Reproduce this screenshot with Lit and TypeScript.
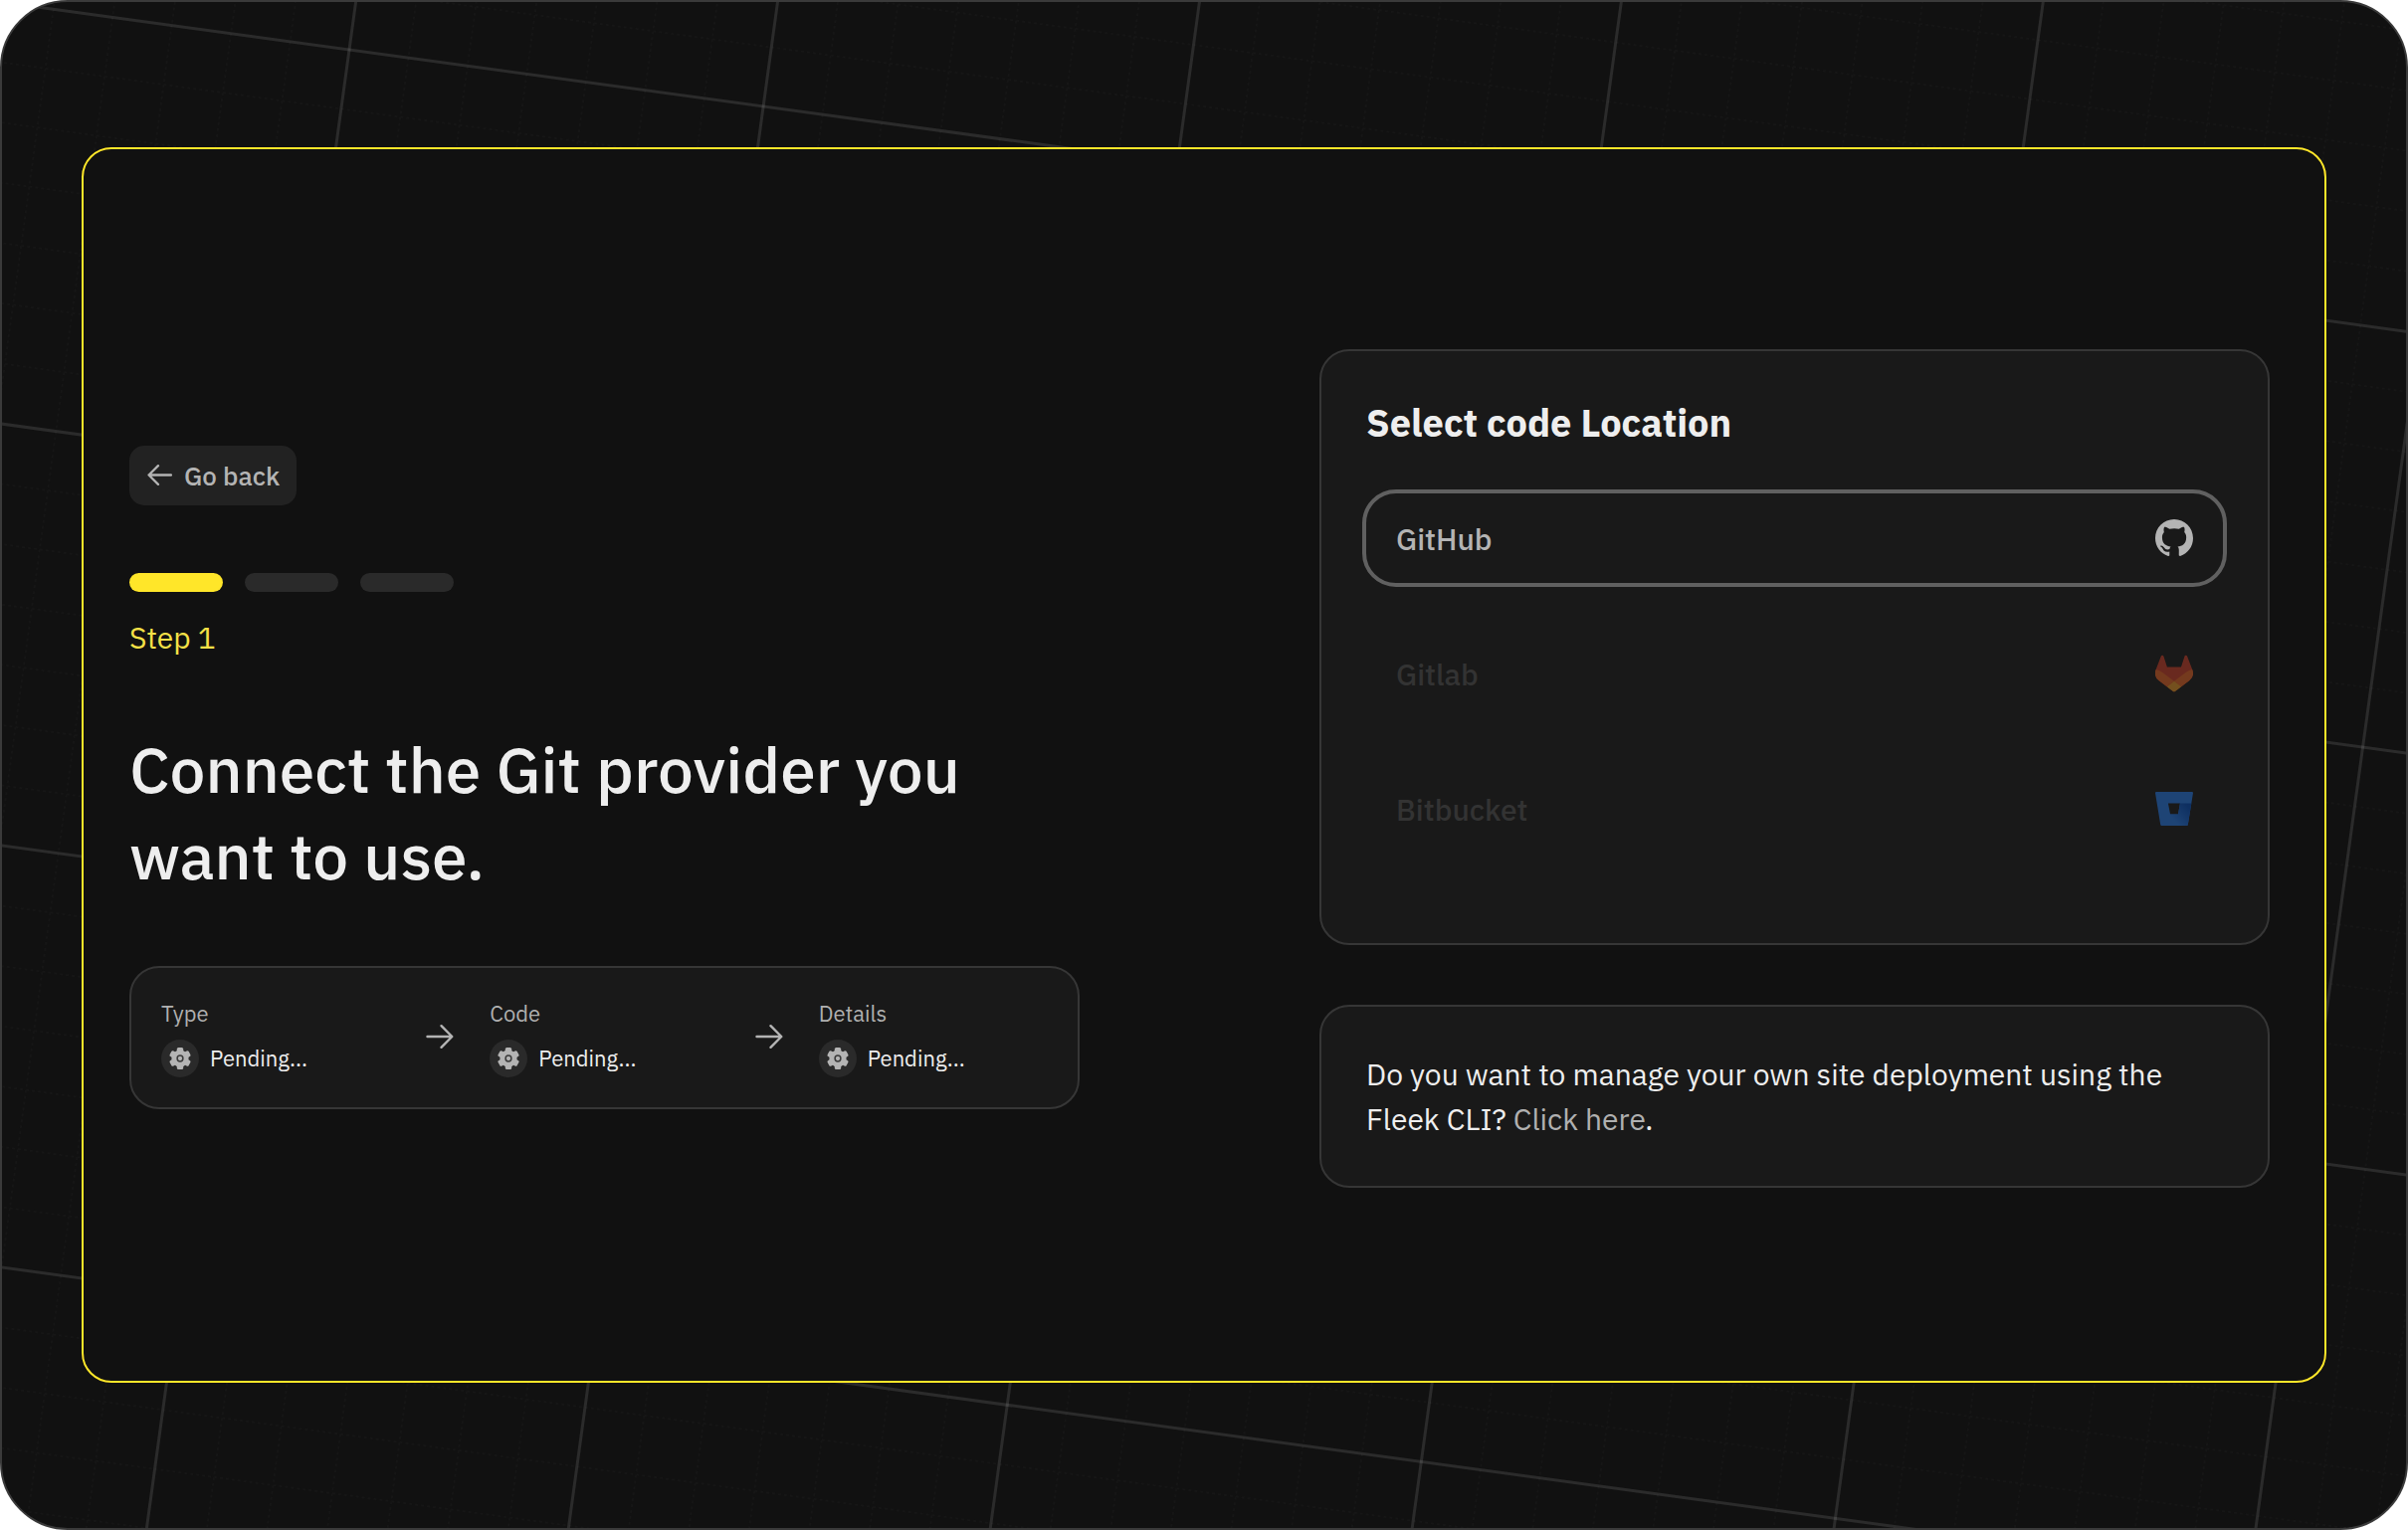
import { LitElement, html, svg, css } from "lit";
import { customElement, property } from "lit/decorators.js";
import { classMap } from "lit/directives/class-map.js";

/** Tilted backdrop: strong lines every seven cells, faint dashed ones between. */
@customElement("grid-backdrop")
class GridBackdrop extends LitElement {
  static styles = css`
    :host {
      display: block;
    }
    .grid {
      display: block;
      width: 100%;
      height: 100%;
    }
    .major {
      stroke: rgba(255, 255, 255, 0.11);
      stroke-width: 3;
    }
    .minor {
      stroke: #161616;
      stroke-width: 2;
      stroke-dasharray: 3 3;
    }
  `;

  render() {
    const cell = 60;
    const reach = 4200;
    const steps = Array.from({ length: 113 }, (_, i) => i - 56);
    const name = (n: number) => (n % 7 === 0 ? "major" : "minor");
    const ordered = [...steps].sort((a, b) => Number(a % 7 === 0) - Number(b % 7 === 0));
    return html`
      <svg class="grid" aria-hidden="true">
        <g transform="translate(349 48) rotate(7.8)">
          ${ordered.map(
            (n) => svg`
              <line class=${name(n)} x1=${n * cell} x2=${n * cell} y1=${-reach} y2=${reach}></line>
              <line class=${name(n)} y1=${n * cell} y2=${n * cell} x1=${-reach} x2=${reach}></line>`
          )}
        </g>
      </svg>
    `;
  }
}

const arrowRight = html`
  <svg class="arrow" viewBox="0 0 28 28" aria-hidden="true">
    <path d="M1.5 14h24.5M15.5 3.2 26.3 14 15.5 24.8" fill="none" stroke="currentColor"
      stroke-width="2.4" stroke-linecap="round" stroke-linejoin="round"></path>
  </svg>
`;

const arrowLeft = html`
  <svg class="back-arrow" viewBox="0 0 24 24" aria-hidden="true">
    <path d="M23 12H1.5M10.5 3 1.5 12l9 9" fill="none" stroke="currentColor"
      stroke-width="2.2" stroke-linecap="round" stroke-linejoin="round"></path>
  </svg>
`;

const gear = html`
  <svg class="gear" viewBox="0 0 24 24" aria-hidden="true">
    <g fill="#b4b4b4">
      <circle cx="12" cy="12" r="8.6"></circle>
      <rect x="8.8" y="1" width="6.4" height="22" rx="1.6"></rect>
      <rect x="8.8" y="1" width="6.4" height="22" rx="1.6" transform="rotate(60 12 12)"></rect>
      <rect x="8.8" y="1" width="6.4" height="22" rx="1.6" transform="rotate(120 12 12)"></rect>
    </g>
    <circle cx="12" cy="12" r="2.9" fill="none" stroke="#3a3a3a" stroke-width="1.5"></circle>
  </svg>
`;

const githubLogo = html`
  <svg class="logo" viewBox="0 0 16 16" aria-hidden="true">
    <path fill="#b4b4b4" d="M8 0C3.58 0 0 3.58 0 8c0 3.54 2.29 6.53 5.47 7.59.4.07.55-.17.55-.38 0-.19-.01-.82-.01-1.49-2.01.37-2.53-.49-2.69-.94-.09-.23-.48-.94-.82-1.13-.28-.15-.68-.52-.01-.53.63-.01 1.08.58 1.23.82.72 1.21 1.87.87 2.33.66.07-.52.28-.87.51-1.07-1.78-.2-3.64-.89-3.64-3.95 0-.87.31-1.59.82-2.15-.08-.2-.36-1.02.08-2.12 0 0 .67-.21 2.2.82.64-.18 1.32-.27 2-.27s1.36.09 2 .27c1.53-1.04 2.2-.82 2.2-.82.44 1.1.16 1.92.08 2.12.51.56.82 1.27.82 2.15 0 3.07-1.87 3.75-3.65 3.95.29.25.54.73.54 1.48 0 1.07-.01 1.93-.01 2.2 0 .21.15.46.55.38A8.01 8.01 0 0 0 16 8c0-4.42-3.58-8-8-8z"></path>
  </svg>
`;

const gitlabLogo = html`
  <svg class="logo" viewBox="0 0 25 24" aria-hidden="true">
    <path fill="#e24329" d="M24.507 9.5l-.034-.09L21.082.562a.896.896 0 00-1.694.091l-2.29 7.01H7.825L5.535.653a.898.898 0 00-1.694-.09L.451 9.411.416 9.5a6.297 6.297 0 002.09 7.278l.012.01.03.022 5.16 3.867 2.56 1.935 1.554 1.176a1.051 1.051 0 001.268 0l1.555-1.176 2.56-1.935 5.197-3.89.014-.01A6.297 6.297 0 0024.507 9.5z"></path>
    <path fill="#fc6d26" d="M24.507 9.5l-.034-.09a11.44 11.44 0 00-4.56 2.051l-7.447 5.632 4.742 3.584 5.197-3.89.014-.01A6.297 6.297 0 0024.507 9.5z"></path>
    <path fill="#fca326" d="M7.707 20.677l2.56 1.935 1.555 1.176a1.051 1.051 0 001.268 0l1.555-1.176 2.56-1.935-4.743-3.584-4.755 3.584z"></path>
    <path fill="#fc6d26" d="M5.01 11.461a11.43 11.43 0 00-4.56-2.05L.416 9.5a6.297 6.297 0 002.09 7.278l.012.01.03.022 5.16 3.867 4.745-3.584-7.444-5.632z"></path>
  </svg>
`;

const bitbucketLogo = html`
  <svg class="logo" viewBox="0 0 24 24" aria-hidden="true">
    <defs>
      <linearGradient id="bucket-shade" x1="23" y1="9" x2="12" y2="19" gradientUnits="userSpaceOnUse">
        <stop offset="0.18" stop-color="#0052cc"></stop>
        <stop offset="1" stop-color="#2684ff"></stop>
      </linearGradient>
    </defs>
    <path fill="#2684ff" d="M.778 1.213a.768.768 0 00-.768.892l3.263 19.81c.084.5.515.868 1.022.873H19.95a.772.772 0 00.77-.646l3.27-20.03a.768.768 0 00-.768-.891zM14.52 15.53H9.522L8.17 8.466h7.561z"></path>
    <path fill="url(#bucket-shade)" d="M22.95 8.466H15.73L14.52 15.53H9.522L3.62 22.54c.2.16.44.248.675.248H19.95a.772.772 0 00.77-.646z"></path>
  </svg>
`;

/** The "Type → Code → Details" summary card. */
@customElement("deploy-summary")
class DeploySummary extends LitElement {
  static styles = css`
    :host {
      display: block;
    }
    .card {
      display: flex;
      align-items: center;
      gap: 36px;
      padding: 29px 30px 30px;
      border: 2px solid #363636;
      border-radius: 30px;
      background: #191919;
    }
    .item {
      flex: 1;
      display: flex;
      flex-direction: column;
      gap: 10px;
      font-size: 22px;
      line-height: 33px;
    }
    .label {
      color: #b0b0b0;
    }
    .status {
      display: flex;
      align-items: center;
      gap: 11px;
      color: #eeeeee;
    }
    .badge {
      display: flex;
      align-items: center;
      justify-content: center;
      width: 38px;
      height: 38px;
      border-radius: 50%;
      background: #2a2a2a;
    }
    .gear {
      width: 24px;
      height: 24px;
    }
    .arrow {
      flex: none;
      width: 28px;
      height: 28px;
      color: #b4b4b4;
    }
  `;

  @property({ attribute: false }) items: string[] = ["Type", "Code", "Details"];

  render() {
    return html`
      <div class="card">
        ${this.items.map(
          (label, i) => html`
            ${i > 0 ? arrowRight : null}
            <div class="item">
              <span class="label">${label}</span>
              <span class="status"><span class="badge">${gear}</span>Pending...</span>
            </div>
          `
        )}
      </div>
    `;
  }
}

@customElement("app-root")
class AppRoot extends LitElement {
  static styles = css`
    :host {
      display: block;
      font-family: "IBM Plex Sans", Roboto, "Liberation Sans", sans-serif;
      color: #eeeeee;
    }
    * {
      box-sizing: border-box;
    }
    h1,
    h2,
    p {
      margin: 0;
    }
    button {
      font: inherit;
      margin: 0;
      cursor: pointer;
    }
    .stage {
      position: relative;
      display: flex;
      flex-direction: column;
      min-height: 100vh;
      padding: 146px 80px;
      overflow: hidden;
      border: 2px solid #3a3a3a;
      border-radius: 68px;
      background: #111111;
    }
    .backdrop {
      position: absolute;
      inset: 0;
    }
    .panel {
      position: relative;
      flex: 1;
      display: grid;
      grid-template-columns: 1fr 1fr;
      align-items: center;
      column-gap: 241px;
      padding: 7px 55px 0 46px;
      border: 2px solid #ffe629;
      border-radius: 30px;
      background: #111111;
    }
    .intro {
      display: flex;
      flex-direction: column;
      padding-top: 17px;
    }
    .back {
      align-self: flex-start;
      display: flex;
      align-items: center;
      gap: 12px;
      height: 60px;
      padding: 0 17px 0 18px;
      border: 0;
      border-radius: 15px;
      background: #222222;
      color: #b4b4b4;
      font-size: 26px;
      font-weight: 500;
    }
    .back-arrow {
      width: 25px;
      height: 25px;
    }
    .progress {
      display: flex;
      gap: 22px;
      margin-top: 68px;
    }
    .bar {
      width: 94px;
      height: 19px;
      border-radius: 10px;
      background: #2a2a2a;
    }
    .bar.active {
      background: #ffe629;
    }
    .step {
      margin-top: 23px;
      color: #f5e147;
      font-size: 30px;
      line-height: 45px;
    }
    .headline {
      margin-top: 67px;
      font-size: 64px;
      font-weight: 500;
      line-height: 87px;
    }
    .summary {
      margin-top: 67px;
    }
    .choices {
      display: flex;
      flex-direction: column;
      gap: 60px;
    }
    .card {
      border: 2px solid #363636;
      border-radius: 30px;
      background: #191919;
    }
    .providers {
      padding: 48px 41px 86px;
    }
    .title {
      padding-left: 4px;
      font-size: 38px;
      font-weight: 700;
      line-height: 48px;
    }
    .list {
      display: flex;
      flex-direction: column;
      gap: 38px;
      margin-top: 43px;
    }
    .option {
      display: flex;
      align-items: center;
      justify-content: space-between;
      height: 98px;
      padding: 0 30px;
      border: 4px solid transparent;
      border-radius: 34px;
      background: none;
      color: #b4b4b4;
      font-size: 30px;
      font-weight: 500;
    }
    .option.selected {
      border-color: #606060;
    }
    .option:disabled {
      color: #333333;
      cursor: default;
    }
    .logo {
      width: 38px;
      height: 38px;
    }
    .option:disabled .logo {
      opacity: 0.4;
    }
    .cli {
      padding: 45px;
      font-size: 30px;
      line-height: 45px;
    }
    .link {
      color: #b0b0b0;
      text-decoration: none;
    }
  `;

  private providers = [
    { name: "GitHub", logo: githubLogo, enabled: true },
    { name: "Gitlab", logo: gitlabLogo, enabled: false },
    { name: "Bitbucket", logo: bitbucketLogo, enabled: false },
  ];

  render() {
    return html`
      <div class="stage">
        <grid-backdrop class="backdrop"></grid-backdrop>
        <main class="panel">
          <section class="intro">
            <button class="back" type="button">${arrowLeft}Go back</button>
            <div class="progress">
              ${[1, 2, 3].map((n) => html`<span class=${classMap({ bar: true, active: n === 1 })}></span>`)}
            </div>
            <p class="step">Step 1</p>
            <h1 class="headline">Connect the Git provider you<br />want to use.</h1>
            <deploy-summary class="summary"></deploy-summary>
          </section>
          <section class="choices">
            <div class="card providers">
              <h2 class="title">Select code Location</h2>
              <div class="list">
                ${this.providers.map(
                  (p) => html`
                    <button
                      type="button"
                      class=${classMap({ option: true, selected: p.enabled })}
                      ?disabled=${!p.enabled}
                    >
                      ${p.name}${p.logo}
                    </button>
                  `
                )}
              </div>
            </div>
            <p class="card cli">
              Do you want to manage your own site deployment using the<br />Fleek CLI?
              <a class="link" href="#cli">Click here</a>.
            </p>
          </section>
        </main>
      </div>
    `;
  }
}
